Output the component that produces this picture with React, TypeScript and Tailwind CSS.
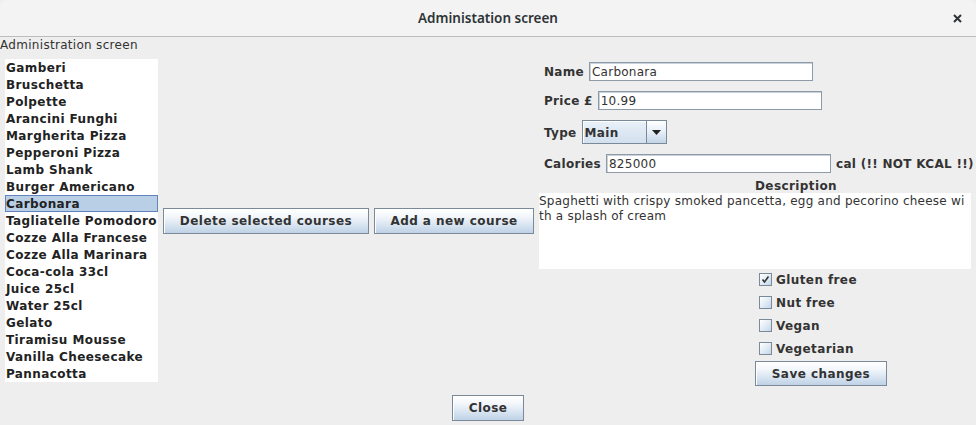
import React from "react";

const items = [
  "Gamberi",
  "Bruschetta",
  "Polpette",
  "Arancini Funghi",
  "Margherita Pizza",
  "Pepperoni Pizza",
  "Lamb Shank",
  "Burger Americano",
  "Carbonara",
  "Tagliatelle Pomodoro",
  "Cozze Alla Francese",
  "Cozze Alla Marinara",
  "Coca-cola 33cl",
  "Juice 25cl",
  "Water 25cl",
  "Gelato",
  "Tiramisu Mousse",
  "Vanilla Cheesecake",
  "Pannacotta",
];

const btn =
  "border border-[#7a8a99] bg-[linear-gradient(to_bottom,#ffffff_0%,#f4f7fb_30%,#dde8f3_60%,#bfd2e6_100%)] shadow-[inset_1px_1px_0_#ffffff] text-[12px] font-bold tracking-[0.45px] text-[#333333] flex items-center justify-center leading-none";

const lbl = "shrink-0 text-[12px] font-bold tracking-[0.3px] text-[#333333] whitespace-nowrap";

function Field({ value, w }: { value: string; w: string }) {
  return (
    <div
      className={`${w} shrink-0 h-[19px] bg-white border border-[#8d9aa8] shadow-[inset_1px_1px_0_#c9d2db] flex items-center pl-[2px] pt-[1px] text-[12px] tracking-[0.25px] text-[#333333] leading-none`}
    >
      {value}
    </div>
  );
}

function Check({ checked, label }: { checked?: boolean; label: string }) {
  return (
    <div className="h-[23px] flex items-center pl-[220px]">
      <div className="w-[13px] h-[13px] border border-[#7a8a99] bg-[linear-gradient(to_bottom_right,#ffffff_0%,#dde8f3_60%,#c4d5e8_100%)] flex items-center justify-center">
        {checked && (
          <svg width="9" height="9" viewBox="0 0 9 9">
            <path d="M1.5 4.5 L3.5 7 L7.5 1.5" stroke="#333" strokeWidth="1.6" fill="none" />
          </svg>
        )}
      </div>
      <span className={`ml-[4px] leading-none ${lbl} tracking-[0.4px]`}>{label}</span>
    </div>
  );
}

export default function App() {
  return (
    <div className="w-[976px] h-[425px] bg-[#eeeeee] font-['DejaVu_Sans',sans-serif] overflow-hidden flex flex-col">
      {/* Title bar */}
      <div className="relative h-[37px] shrink-0 bg-[#f3f3f3] border-b border-[#bdbdbd] rounded-t-[7px] flex items-center justify-center">
        <span className="font-['Noto_Sans',sans-serif] text-[13.5px] font-semibold text-[#2e3436]">
          Administation screen
        </span>
        <div className="absolute right-[14px] top-[14px]">
          <svg width="9" height="9" viewBox="0 0 9 9">
            <path d="M1 1 L8 8 M8 1 L1 8" stroke="#2e3436" strokeWidth="2" />
          </svg>
        </div>
      </div>

      {/* Main */}
      <div className="flex items-start h-[348px] shrink-0">
        {/* Left column */}
        <div className="flex flex-col w-[158px] shrink-0">
          <div className="h-[22px] leading-[15px] pt-[1px] text-[12px] tracking-[0.3px] text-[#333333] whitespace-nowrap">
            Administration screen
          </div>
          <div className="ml-[5px] w-[153px] h-[323px] bg-white">
            {items.map((it) => (
              <div
                key={it}
                className={`h-[17px] leading-[17px] pt-[1px] pl-[1px] text-[12px] font-bold tracking-[0.4px] text-[#222222] whitespace-nowrap overflow-hidden ${
                  it === "Carbonara" ? "bg-[#b8cfe5] shadow-[inset_0_0_0_1px_#6382bf]" : ""
                }`}
              >
                {it}
              </div>
            ))}
          </div>
        </div>

        {/* Middle buttons */}
        <div className={`${btn} shrink-0 ml-[5px] mt-[171px] w-[206px] h-[26px]`}>Delete selected courses</div>
        <div className={`${btn} shrink-0 ml-[5px] mt-[171px] w-[160px] h-[26px]`}>Add a new course</div>

        {/* Right panel */}
        <div className="ml-[5px] w-[432px] shrink-0 flex flex-col pt-[20px]">
          <div className="py-[5px] pl-[5px] flex items-center gap-[5px]">
            <span className={`${lbl} pt-[1px]`}>Name</span>
            <Field value="Carbonara" w="w-[224px]" />
          </div>
          <div className="py-[5px] pl-[5px] flex items-center gap-[5px]">
            <span className={`${lbl} pt-[1px]`}>Price £</span>
            <Field value="10.99" w="w-[224px]" />
          </div>
          <div className="py-[5px] pl-[5px] flex items-center gap-[5px]">
            <span className={`${lbl} pt-[1px]`}>Type</span>
            <div className="shrink-0 w-[85px] h-[24px] border border-[#7a8a99] flex">
              <div className={`flex-1 bg-[linear-gradient(to_bottom,#eaf1f8_0%,#dde8f3_50%,#d3e0ee_100%)] shadow-[inset_1px_1px_0_#ffffff] flex items-center pl-[2px] pt-[1px] text-[12px] font-bold tracking-[0.4px] text-[#333333]`}>
                Main
              </div>
              <div className="w-[20px] border-l border-[#7a8a99] bg-[linear-gradient(to_bottom,#ffffff_0%,#e6eef7_50%,#c4d5e8_100%)] flex items-center justify-center">
                <svg width="9" height="5" viewBox="0 0 9 5">
                  <path d="M0 0 L9 0 L4.5 5 Z" fill="#222" />
                </svg>
              </div>
            </div>
          </div>
          <div className="py-[5px] pl-[5px] flex items-center gap-[5px] overflow-visible">
            <span className={`${lbl} pt-[1px]`}>Calories</span>
            <Field value="825000" w="w-[225px]" />
            <span className={`${lbl} pt-[1px]`}>cal (!! NOT KCAL !!)</span>
          </div>
          <div className={`h-[15px] leading-[15px] pt-[1px] pl-[216px] ${lbl} tracking-[0.4px]`}>Description</div>
          <div className="w-[432px] h-[76px] bg-white text-[12px] tracking-[0.23px] text-[#333333] leading-[15px] pt-[1px]">
            <div className="whitespace-nowrap">Spaghetti with crispy smoked pancetta, egg and pecorino cheese wi</div>
            <div className="whitespace-nowrap">th a splash of cream</div>
          </div>
          <div className="-mt-[1px] flex flex-col">
            <Check checked label="Gluten free" />
            <Check label="Nut free" />
            <Check label="Vegan" />
            <Check label="Vegetarian" />
          </div>
          <div className="pl-[216px] mt-[1px]">
            <div className={`${btn} w-[132px] h-[25px]`}>Save changes</div>
          </div>
        </div>
      </div>

      {/* Close */}
      <div className="flex justify-center mt-[10px]">
        <div className={`${btn} w-[72px] h-[26px]`}>Close</div>
      </div>
    </div>
  );
}
